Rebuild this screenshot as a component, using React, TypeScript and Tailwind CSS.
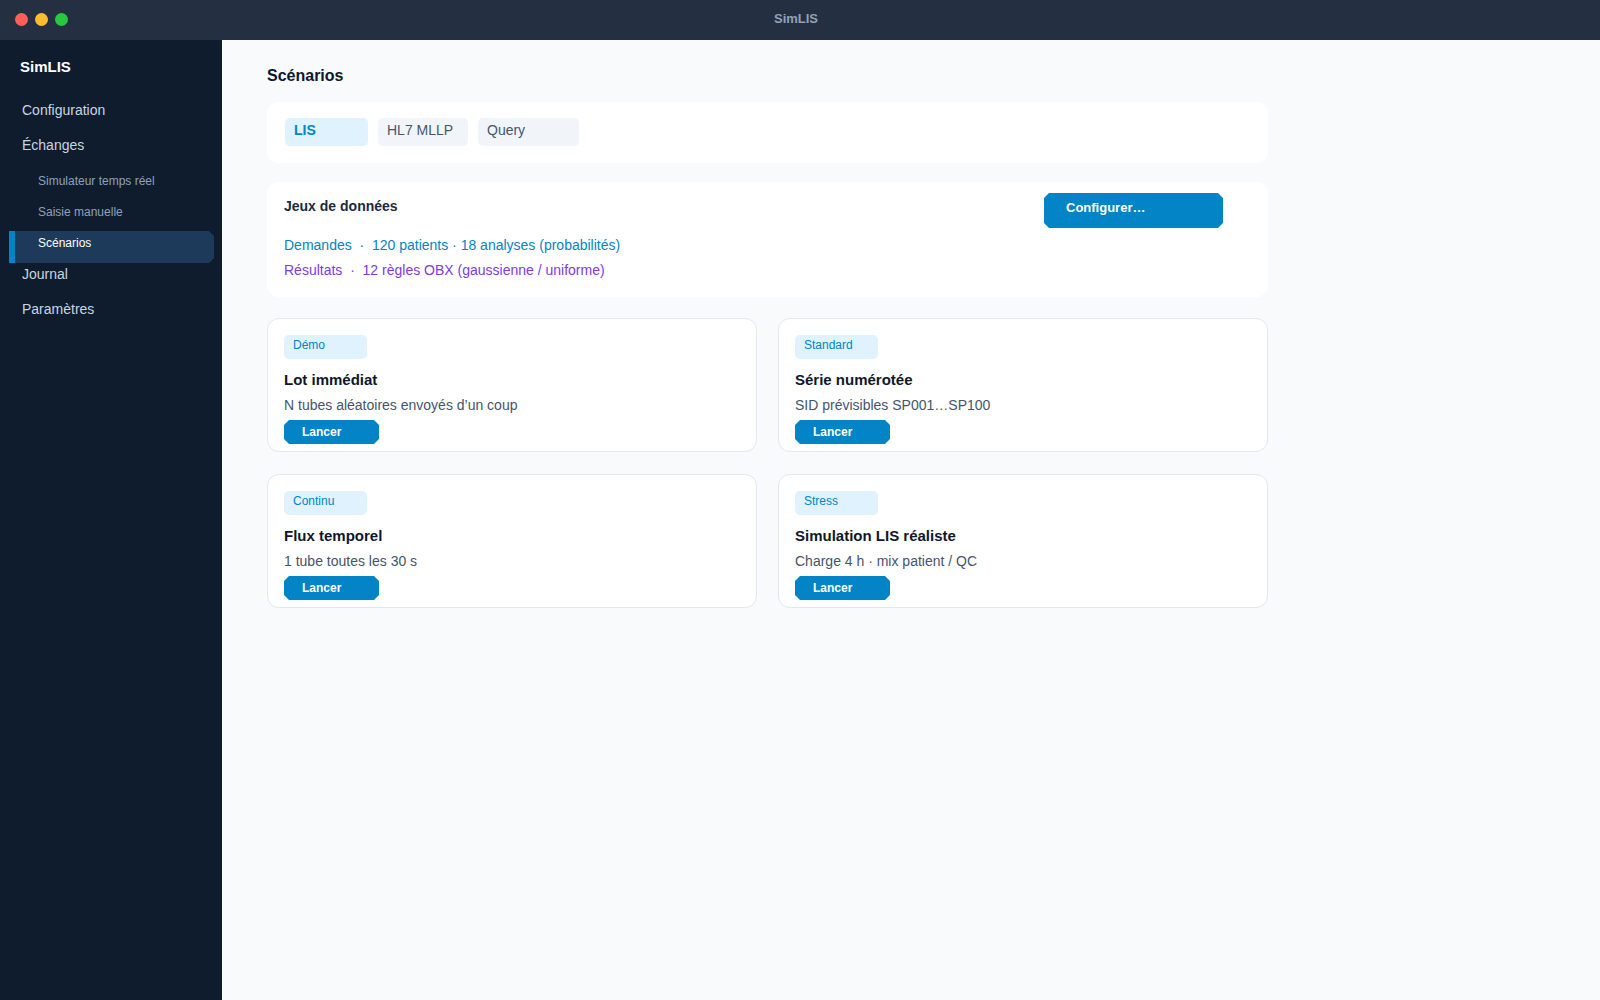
import { useState } from "react";
import clsx from "clsx";

interface NavItem {
  label: string;
  sub?: boolean;
}

interface Scenario {
  badge: string;
  title: string;
  description: string;
}

const NAV_ITEMS: NavItem[] = [
  { label: "Configuration" },
  { label: "Échanges" },
  { label: "Simulateur temps réel", sub: true },
  { label: "Saisie manuelle", sub: true },
  { label: "Scénarios", sub: true },
  { label: "Journal" },
  { label: "Paramètres" },
];

const TABS = [
  { label: "LIS", width: "w-[83px]" },
  { label: "HL7 MLLP", width: "w-[90px]" },
  { label: "Query", width: "w-[101px]" },
];

const SCENARIOS: Scenario[] = [
  {
    badge: "Démo",
    title: "Lot immédiat",
    description: "N tubes aléatoires envoyés d’un coup",
  },
  {
    badge: "Standard",
    title: "Série numérotée",
    description: "SID prévisibles SP001…SP100",
  },
  {
    badge: "Continu",
    title: "Flux temporel",
    description: "1 tube toutes les 30 s",
  },
  {
    badge: "Stress",
    title: "Simulation LIS réaliste",
    description: "Charge 4 h · mix patient / QC",
  },
];

// Cut corners shared by the primary buttons
const CUT_CORNERS =
  "[clip-path:polygon(5px_0,calc(100%-5px)_0,100%_5px,100%_calc(100%-5px),calc(100%-5px)_100%,5px_100%,0_calc(100%-5px),0_5px)]";

function TitleBar() {
  return (
    <header className="flex h-10 items-center bg-[#243042] px-[15px] pb-0.5">
      <div className="flex flex-1 gap-[7px]">
        <span className="size-[13px] rounded-full bg-[#ff5f57]" />
        <span className="size-[13px] rounded-full bg-[#febc2e]" />
        <span className="size-[13px] rounded-full bg-[#28c840]" />
      </div>
      <span className="text-[13px] leading-5 font-bold text-slate-400">
        SimLIS
      </span>
      <div className="flex-1 pr-2" />
    </header>
  );
}

function Sidebar({
  active,
  onSelect,
}: {
  active: string;
  onSelect: (label: string) => void;
}) {
  return (
    <aside className="w-[222px] shrink-0 bg-[#0f1c2e] pt-[15px]">
      <p className="px-5 text-[15px] leading-6 font-bold text-white">SimLIS</p>

      <nav className="mt-5 flex flex-col pr-2 pl-[9px]">
        {NAV_ITEMS.map((item) => {
          const isActive = item.label === active;

          return (
            <a
              key={item.label}
              href="#"
              onClick={() => onSelect(item.label)}
              aria-current={isActive ? "page" : undefined}
              className={clsx(
                item.sub ? "text-xs leading-6" : "text-sm leading-[22px]",
                item.sub && !isActive && "h-[31px] pl-[29px] text-slate-400",
                !item.sub && "h-[35px] pl-[13px] text-slate-300",
                isActive &&
                  "h-8 border-l-6 border-[#0284c7] bg-[#1e3a5a] pl-[23px] text-white [clip-path:polygon(0_0,calc(100%-5px)_0,100%_5px,100%_calc(100%-5px),calc(100%-5px)_100%,0_100%)]"
              )}
            >
              {item.label}
            </a>
          );
        })}
      </nav>
    </aside>
  );
}

function ScenarioCard({ scenario }: { scenario: Scenario }) {
  return (
    <article className="flex flex-col items-start rounded-xl border border-slate-200 bg-white px-4 pt-4 pb-[7px]">
      <span className="h-6 w-[83px] rounded-[5px] bg-sky-100 pl-[9px] text-xs leading-5 text-[#0284c7]">
        {scenario.badge}
      </span>
      <h3 className="mt-[11px] text-[15px] leading-5 font-bold text-slate-900">
        {scenario.title}
      </h3>
      <p className="mt-[5px] text-sm leading-5 text-slate-600">
        {scenario.description}
      </p>
      <button
        type="button"
        className={clsx(
          "mt-[5px] h-6 w-[95px] bg-[#0284c7] pl-[18px] text-left text-xs leading-6 font-bold text-white",
          CUT_CORNERS
        )}
      >
        Lancer
      </button>
    </article>
  );
}

export default function App() {
  const [page, setPage] = useState("Scénarios");
  const [tab, setTab] = useState("LIS");

  return (
    <div className="flex min-h-screen flex-col bg-slate-50 font-['Liberation_Sans',Arial,sans-serif]">
      <TitleBar />

      <div className="flex flex-1">
        <Sidebar active={page} onSelect={setPage} />

        <main className="min-w-0 flex-1 px-[45px] pt-6 pb-6">
          <div className="max-w-[1001px]">
            <h1 className="text-base leading-6 font-bold text-slate-900">
              Scénarios
            </h1>

            {/* Protocol */}
            <div className="mt-[14px] flex gap-[10px] rounded-xl bg-white px-[18px] pt-4 pb-[17px]">
              {TABS.map(({ label, width }) => (
                <button
                  key={label}
                  type="button"
                  onClick={() => setTab(label)}
                  className={clsx(
                    "flex h-7 items-start rounded-[5px] pl-[9px] text-sm leading-6",
                    width,
                    tab === label
                      ? "bg-sky-100 font-bold text-[#0284c7]"
                      : "bg-slate-100 text-slate-600"
                  )}
                >
                  {label}
                </button>
              ))}
            </div>

            {/* Data sets */}
            <section className="mt-[19px] flex items-start justify-between rounded-xl bg-white pr-[45px] pl-[17px]">
              <div className="pt-[14px] pb-[14px]">
                <h2 className="text-sm leading-5 font-bold text-slate-800">
                  Jeux de données
                </h2>
                <div className="mt-[17px] text-sm leading-[25px] whitespace-pre">
                  <p className="text-[#0284c7]">
                    {"Demandes  ·  120 patients · 18 analyses (probabilités)"}
                  </p>
                  <p className="text-[#7c3aed]">
                    {"Résultats  ·  12 règles OBX (gaussienne / uniforme)"}
                  </p>
                </div>
              </div>
              <button
                type="button"
                className={clsx(
                  "mt-[11px] flex h-[35px] w-[179px] items-start bg-[#0284c7] pl-[22px] text-[13px] leading-[30px] font-bold text-white",
                  CUT_CORNERS
                )}
              >
                Configurer…
              </button>
            </section>

            {/* Scenarios */}
            <div className="mt-[21px] grid grid-cols-2 gap-x-[21px] gap-y-[22px]">
              {SCENARIOS.map((scenario) => (
                <ScenarioCard key={scenario.title} scenario={scenario} />
              ))}
            </div>
          </div>
        </main>
      </div>
    </div>
  );
}
